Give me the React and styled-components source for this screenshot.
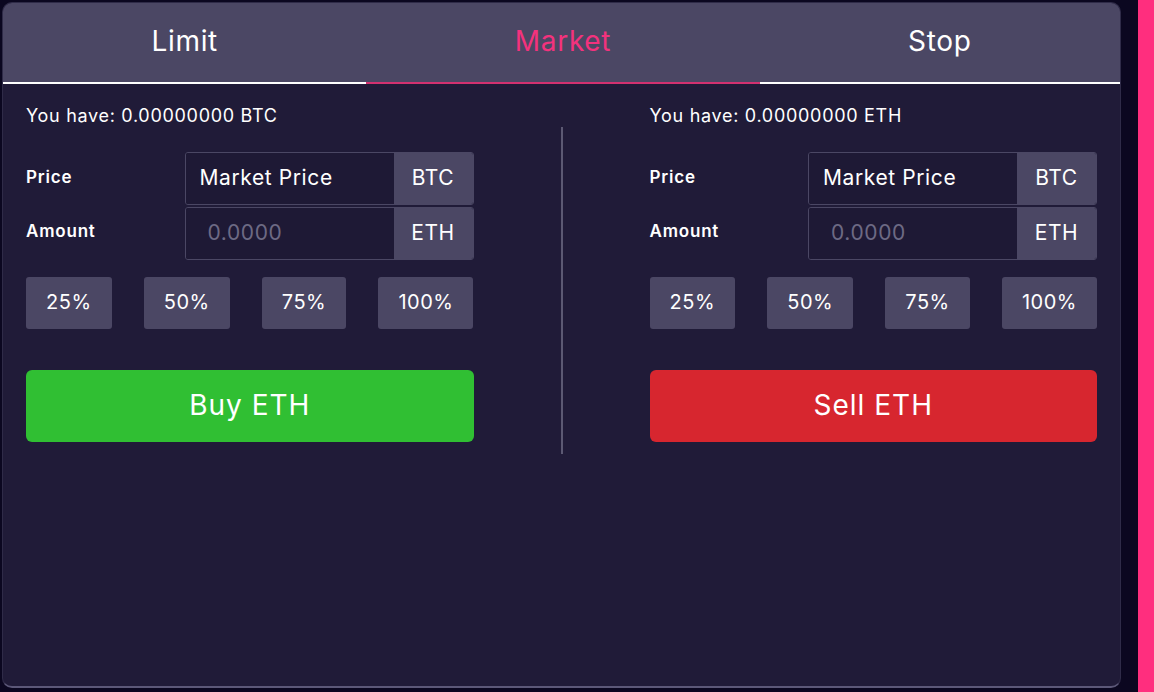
import React, { useState } from "react";
import styled, { createGlobalStyle } from "styled-components";

const GlobalStyle = createGlobalStyle`
  html, body {
    margin: 0;
    padding: 0;
    height: 100%;
    background: #0b0720;
    font-family: "Inter", "Lato", sans-serif;
  }
  #root {
    height: 100%;
  }
`;

export default function App() {
  const [tab, setTab] = useState("Market");

  return (
    <>
      <GlobalStyle />
      <Page>
        <Card>
          <Tabs>
            {["Limit", "Market", "Stop"].map((t) => (
              <Tab key={t} $active={tab === t} onClick={() => setTab(t)}>
                {t}
              </Tab>
            ))}
          </Tabs>
          <Body>
            <OrderForm have="BTC" side="buy" />
            <Divider />
            <OrderForm have="ETH" side="sell" />
          </Body>
        </Card>
        <Stripe />
      </Page>
    </>
  );
}

function OrderForm({ have, side }) {
  return (
    <Column>
      <Balance>You have: 0.00000000 {have}</Balance>
      <Field>
        <Label>Price</Label>
        <InputGroup $first>
          <TextBox>Market Price</TextBox>
          <Addon>BTC</Addon>
        </InputGroup>
      </Field>
      <Field>
        <Label>Amount</Label>
        <InputGroup>
          <TextBox $placeholder>0.0000</TextBox>
          <Addon>ETH</Addon>
        </InputGroup>
      </Field>
      <Percents>
        {["25%", "50%", "75%", "100%"].map((p) => (
          <PercentButton key={p}>{p}</PercentButton>
        ))}
      </Percents>
      <ActionButton $side={side}>
        {side === "buy" ? "Buy ETH" : "Sell ETH"}
      </ActionButton>
    </Column>
  );
}

const Page = styled.div`
  display: flex;
  height: 100%;
  box-sizing: border-box;
  padding: 2px 0 4px 2px;
  gap: 17px;
`;

const Card = styled.div`
  width: 1119px;
  flex: none;
  display: flex;
  flex-direction: column;
  background: #201b38;
  border-radius: 10px;
  overflow: hidden;
  border: 1px solid #2f2b48;
  border-bottom: 2px solid #5c5878;
  box-sizing: border-box;
`;

const Stripe = styled.div`
  flex: 1;
  margin-top: -2px;
  margin-bottom: -4px;
  background: #ff2e7e;
`;

const Tabs = styled.div`
  display: flex;
  height: 81px;
  background: #4b4764;
`;

const Tab = styled.div`
  flex: 1 1 auto;
  display: flex;
  align-items: center;
  justify-content: center;
  padding-bottom: 4px;
  font-size: 28px;
  letter-spacing: 0.7px;
  color: ${(p) => (p.$active ? "#f3327d" : "#ffffff")};
  border-bottom: 2px solid ${(p) => (p.$active ? "#d33170" : "#ffffff")};
  cursor: pointer;
`;

const Body = styled.div`
  display: flex;
  padding: 0 23px;
  gap: 87px;
`;

const Divider = styled.div`
  width: 2px;
  flex: none;
  margin-top: 43px;
  height: 327px;
  background: #5c5973;
`;

const Column = styled.div`
  flex: 1;
  display: flex;
  flex-direction: column;
  padding-top: 20px;
`;

const Balance = styled.div`
  color: #ffffff;
  font-size: 18px;
  letter-spacing: 0.7px;
  line-height: 24px;
  margin-bottom: 24px;
`;

const Field = styled.div`
  display: flex;
  align-items: center;
  justify-content: space-between;
`;

const Label = styled.div`
  color: #ffffff;
  font-size: 17px;
  font-weight: 600;
  letter-spacing: 0.8px;
  margin-top: -4px;
`;

const InputGroup = styled.div`
  display: flex;
  width: 289px;
  height: 53px;
  margin-top: ${(p) => (p.$first ? "0" : "2px")};
  border: 1px solid #4b4764;
  border-radius: 3px;
  box-sizing: border-box;
  overflow: hidden;
`;

const TextBox = styled.div`
  flex: 1;
  display: flex;
  align-items: center;
  padding-left: ${(p) => (p.$placeholder ? "22px" : "14px")};
  padding-bottom: 2px;
  font-size: 21px;
  letter-spacing: 0.6px;
  color: ${(p) => (p.$placeholder ? "#6d6a84" : "#ffffff")};
  background: #1e1935;
`;

const Addon = styled.div`
  width: 79px;
  display: flex;
  align-items: center;
  justify-content: center;
  padding-bottom: 2px;
  background: #4b4764;
  color: #ffffff;
  font-size: 21px;
  letter-spacing: 0.6px;
`;

const Percents = styled.div`
  display: flex;
  gap: 32px;
  margin-top: 17px;
`;

const PercentButton = styled.div`
  flex: 1 1 auto;
  height: 52px;
  display: flex;
  align-items: center;
  justify-content: center;
  padding-bottom: 2px;
  box-sizing: border-box;
  background: #4b4764;
  border-radius: 3px;
  color: #ffffff;
  font-size: 20px;
  letter-spacing: 0.5px;
`;

const ActionButton = styled.div`
  margin-top: 41px;
  height: 72px;
  display: flex;
  align-items: center;
  justify-content: center;
  padding-bottom: 3px;
  box-sizing: border-box;
  border-radius: 6px;
  background: ${(p) => (p.$side === "buy" ? "#30bf33" : "#d7262f")};
  color: #ffffff;
  font-size: 28px;
  letter-spacing: 1px;
`;
